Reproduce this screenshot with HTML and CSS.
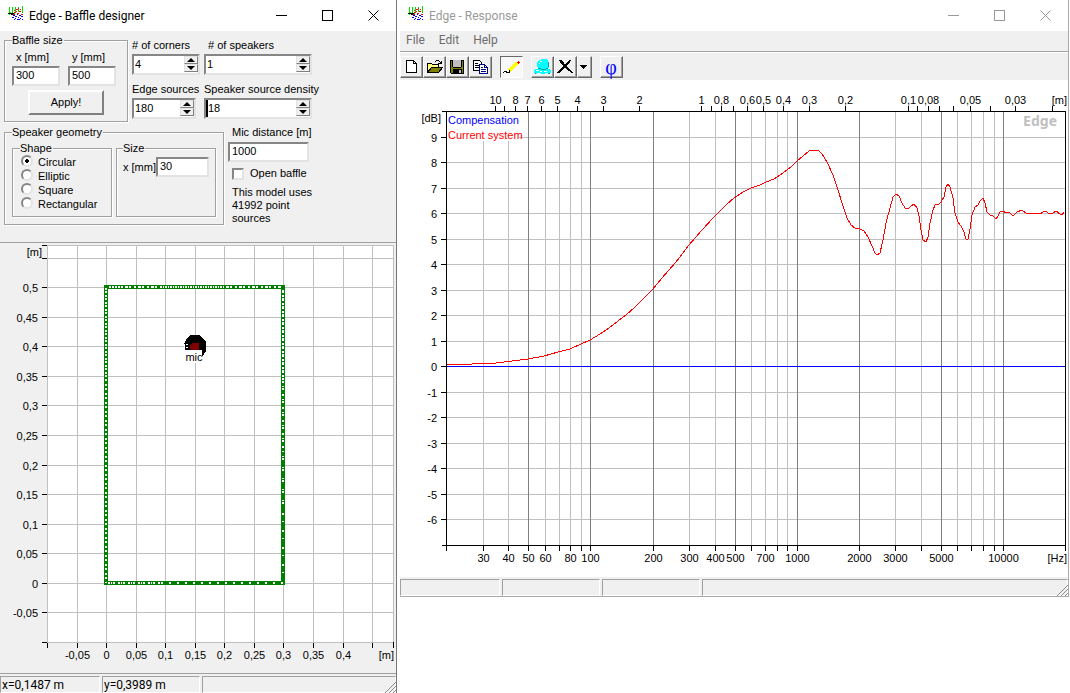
FILE: index.html
```html
<!DOCTYPE html>
<html lang="en">
<head>
    <meta charset="UTF-8">
    <meta name="viewport" content="width=device-width, initial-scale=1.0">
    <title>Edge</title>
    <link rel="stylesheet" href="styles.css">
</head>
<body>
    <svg class="defs" aria-hidden="true">
        <symbol id="app-icon" viewBox="0 0 16 16">
            <path d="M1.500 1v8M4.500 1v7M7.500 1v6M10.500 1v5M14.500 0v7M1 6.500h2M4 7.500h3" stroke="#00e000" />
            <path d="M0 7.500h6M3 8.500h4" stroke="#000" />
            <path d="M6 4.500h1M8 3.500h2M11 5.500h2M6 6.500h2M9 7.500h2M12 3.500h1M13 8.500h2M10 2.500h1M8 5.500h1M5 8.500h2" stroke="#f00" />
            <path d="M5 9.500h2M9 8.500h1M7 10.500h2M11 9.500h2M4 11.500h2M10 11.500h1M13 10.500h2M7 12.500h1M9 13.500h3M12 12.500h1M6 13.500h1M14 13.500h1" stroke="#00f" />
        </symbol>
        <symbol id="win-min" viewBox="0 0 11 11"><path d="M0 5.500h11" /></symbol>
        <symbol id="win-max" viewBox="0 0 11 11"><path d="M.5 .5h10v10h-10z" /></symbol>
        <symbol id="win-close" viewBox="0 0 11 11"><path d="M.5 .5l10 10M10.500 .5l-10 10" /></symbol>
        <symbol id="grip" viewBox="0 0 12 12">
            <path d="M1 12L12 1M5 12l7-7M9 12l3-3" stroke="#909090" />
        </symbol>
    </svg>

    <main class="desktop">
        <!-- Baffle designer -->
        <section class="window designer">
            <header class="titlebar">
                <svg class="app-icon"><use href="#app-icon" /></svg>
                <h1>Edge - Baffle designer</h1>
                <button class="win-btn" aria-label="Minimize"><svg><use href="#win-min" /></svg></button>
                <button class="win-btn" aria-label="Maximize"><svg><use href="#win-max" /></svg></button>
                <button class="win-btn" aria-label="Close"><svg class="smooth"><use href="#win-close" /></svg></button>
            </header>

            <form class="settings">
                <div class="row">
                    <fieldset class="group baffle-size">
                        <legend>Baffle size</legend>
                        <div class="pair">
                            <div class="field">
                                <label for="baffleX">x [mm]</label>
                                <input type="text" id="baffleX" value="300">
                            </div>
                            <div class="field">
                                <label for="baffleY">y [mm]</label>
                                <input type="text" id="baffleY" value="500">
                            </div>
                        </div>
                        <button type="button" class="apply">Apply!</button>
                    </fieldset>
                    <div class="spinners">
                        <div class="spin-field">
                            <label for="corners"># of corners</label>
                            <div class="spin">
                                <input type="text" id="corners" value="4">
                                <span class="updown"><button type="button" aria-label="Up"></button><button type="button" aria-label="Down"></button></span>
                            </div>
                        </div>
                        <div class="spin-field">
                            <label for="speakers" class="indent"># of speakers</label>
                            <div class="spin">
                                <input type="text" id="speakers" value="1">
                                <span class="updown"><button type="button" aria-label="Up"></button><button type="button" aria-label="Down"></button></span>
                            </div>
                        </div>
                        <div class="spin-field">
                            <label for="edgeSources">Edge sources</label>
                            <div class="spin narrow">
                                <input type="text" id="edgeSources" value="180">
                                <span class="updown"><button type="button" aria-label="Up"></button><button type="button" aria-label="Down"></button></span>
                            </div>
                        </div>
                        <div class="spin-field">
                            <label for="density">Speaker source density</label>
                            <div class="spin caret">
                                <input type="text" id="density" value="18">
                                <span class="updown"><button type="button" aria-label="Up"></button><button type="button" aria-label="Down"></button></span>
                            </div>
                        </div>
                    </div>
                </div>

                <div class="row">
                    <fieldset class="group geometry">
                        <legend>Speaker geometry</legend>
                        <div class="pair">
                            <fieldset class="group shape">
                                <legend>Shape</legend>
                                <label><input type="radio" name="shape" checked>Circular</label>
                                <label><input type="radio" name="shape">Elliptic</label>
                                <label><input type="radio" name="shape">Square</label>
                                <label><input type="radio" name="shape">Rectangular</label>
                            </fieldset>
                            <fieldset class="group size">
                                <legend>Size</legend>
                                <div class="size-row">
                                    <label for="sizeX">x [mm]</label>
                                    <input type="text" id="sizeX" value="30">
                                </div>
                            </fieldset>
                        </div>
                    </fieldset>
                    <div class="mic">
                        <label for="micDistance">Mic distance [m]</label>
                        <input type="text" id="micDistance" value="1000">
                        <label class="check"><input type="checkbox">Open baffle</label>
                        <p>This model uses 41992 point sources</p>
                    </div>
                </div>
            </form>

            <svg id="bafflePlot" class="plot" viewBox="0 243 396 430">
                <rect x="47" y="245" width="347" height="398" fill="#fff" />
                <g id="baffleGrid"></g>
                <!-- baffle outline and its edge sources -->
                <rect x="106" y="287" width="177" height="296" fill="none" stroke="#008000" stroke-width="4" />
                <g class="sources">
                    <path d="M109 287h12" stroke-dasharray="2 1" />
                    <path d="M121 287h38" stroke-dasharray="2 2 3 1 2 3" />
                    <path d="M160 287h65" stroke-dasharray="2 1 1 1" />
                    <path d="M226 287h56" stroke-dasharray="3 1 2 3 2 2" />
                    <path d="M106 288v90" stroke-dasharray="2 1 2 2" />
                    <path d="M106 379v204" stroke-dasharray="2 3 2 2" />
                    <path d="M283 290v90" stroke-dasharray="3 2 2 1" />
                    <path d="M283 381v72" stroke-dasharray="2 3 1 1 2 4" />
                    <path d="M283 456v54" stroke-dasharray="1 1 2 7" />
                    <path d="M283 513v68" stroke-dasharray="2 6 1 8" />
                    <path d="M108 583h52" stroke-dasharray="2 1 1 1 2 3" />
                    <path d="M161 583h124" stroke-dasharray="2 6" />
                </g>
                <!-- speaker and microphone -->
                <path d="M185 350v-8l2-4 4-3h8l4 3 3 4v9l-3 5h-1v-6z" fill="#000" />
                <path d="M184 343h3v4h-3z" fill="#000" />
                <path d="M184.500 344v5M186 344.500h2M186 347.500h2" stroke="#fff" />
                <path d="M190 345l2-2h4l3-1v8h-8l-1-2z" fill="#800000" />
                <path d="M186 350h16v13h-16z" fill="#fff" />
                <text x="194" y="361" class="mid">mic</text>
            </svg>

            <footer class="statusbar">
                <span>x=0,1487 m</span>
                <span>y=0,3989 m</span>
                <span></span>
                <svg class="grip"><use href="#grip" /></svg>
            </footer>
        </section>

        <!-- Response -->
        <section class="window response">
            <header class="titlebar inactive">
                <svg class="app-icon"><use href="#app-icon" /></svg>
                <h1>Edge - Response</h1>
                <button class="win-btn" aria-label="Minimize"><svg><use href="#win-min" /></svg></button>
                <button class="win-btn" aria-label="Maximize"><svg><use href="#win-max" /></svg></button>
                <button class="win-btn" aria-label="Close"><svg class="smooth"><use href="#win-close" /></svg></button>
            </header>
            <nav class="menu">
                <button>File</button>
                <button>Edit</button>
                <button>Help</button>
            </nav>
            <div class="toolbar">
                <div class="tools">
                    <button aria-label="New">
                        <svg viewBox="0 0 17 16"><path d="M3.500 1.500h7l3 3v9h-10zM10.500 1.500v3h3" fill="#fff" stroke="#000" /></svg>
                    </button>
                    <button aria-label="Open">
                        <svg viewBox="0 0 17 16">
                            <path d="M1.500 13.500v-9h4l1 1h6v3h-7z" fill="#ffff80" stroke="#000" />
                            <path d="M1.500 13.500l4-5h11l-4 5z" fill="#808000" stroke="#000" />
                            <path d="M9 2.500h1M10 1.500h3M13 2.500h1M14 3.500h1M12 4.500h3M15.500 2v3" stroke="#000" />
                        </svg>
                    </button>
                    <button aria-label="Save">
                        <svg viewBox="0 0 17 16">
                            <path d="M1.500 1.500h13v13h-12l-1-1z" fill="#808000" stroke="#000" />
                            <path d="M4 1h8v7h-8z" fill="#c0c0c0" />
                            <path d="M4 10h9v5h-9z" fill="#000" />
                            <path d="M10 11h2v3h-2z" fill="#c0c0c0" />
                            <path d="M3.500 2v6M12.500 2v6M4 8.500h8" stroke="#000" />
                        </svg>
                    </button>
                    <button aria-label="Copy">
                        <svg viewBox="0 0 17 16">
                            <path d="M1.500 1.500h6l2 2v8h-8z" fill="#fff" stroke="#000" />
                            <path d="M3 4.500h3M3 6.500h4M3 8.500h4" stroke="#000" />
                            <path d="M7.500 5.500h5l3 3v6h-8z" fill="#fff" stroke="#000080" />
                            <path d="M12.500 5.500v3h3M9 8.500h2M9 10.500h5M9 12.500h5" fill="none" stroke="#000080" />
                        </svg>
                    </button>
                </div>
                <div class="tools">
                    <button class="pressed" aria-label="Draw" aria-pressed="true">
                        <svg viewBox="0 0 17 16">
                            <path d="M6 12l8-8" stroke="#ff0" stroke-width="3" />
                            <path d="M14 3.500h3M15.500 2v3" stroke="#f00" />
                            <path d="M0 13.500h1M1 12.500h3M3 13.500h4M6.500 11v3" stroke="#000" />
                        </svg>
                    </button>
                </div>
                <div class="tools">
                    <button aria-label="Overlay">
                        <svg viewBox="0 0 17 16">
                            <path d="M5 1h2v-1h6v1h1v2h1v5l-1 1v1h2v1h1v3h-1v1h-2v-1h-3v1h-4v-1h-3v1h-3v-1h-1v-3h1v-1h3v-2h-1v-5h1z" fill="#00ffff" />
                            <path d="M6 2.500h2M5 4.500h1M2 11.500h3M6 12.500h2M10 12.500h3M3 14.500h3" stroke="#fff" />
                            <path d="M4 9.500h3M7 10.500h5M12 9.500h2M14.500 3v5M1 14.500h1M14 14.500h2" stroke="#00a0b0" />
                        </svg>
                    </button>
                    <button aria-label="Delete">
                        <svg viewBox="0 0 17 16">
                            <path d="M2 1h2l4 5 5-5h1l-5 6 6 6h-1l-6-5-5 5h-2l6-6z" fill="#000" stroke="#000" />
                        </svg>
                    </button>
                    <button class="drop" aria-label="Delete options">
                        <svg viewBox="0 0 10 16"><path d="M1 6h7l-3 4h-1z" fill="#000" /></svg>
                    </button>
                </div>
                <div class="tools">
                    <button class="phi" aria-label="Phase">&phi;</button>
                </div>
            </div>

            <svg id="responsePlot" class="plot" viewBox="400 80 668 497">
                <g id="responseGrid"></g>
                <path d="M447 366.500h618" stroke="#00f" />
                <polyline class="curve" points="447,365 472,364 496,363 528,359 544,356 558,352 570,349 581,344 590,340 600,334 609,328 618,321 626,315 634,308 641,301 652,290 662,278 676,262 689,245 702,230 714,217 726,205 734,198 743,192 751,188 760,185 766,182 774,179 783,173 791,167 797,161 803,156 809,151 813,150 818,150 822,154 827,162 833,175 838,190 843,206 847,218 851,225 855,228 860,229 864,231 868,237 872,246 875,253 877,255 880,253 883,240 886,223 890,208 893,197 896,194 899,196 902,203 905,208 908,209 911,206 914,204 917,208 919,216 921,230 923,240 926,242 928,237 930,223 933,210 935,205 939,204 941,202 944,197 946,187 948,184 950,187 953,198 955,213 958,222 961,226 964,232 966,239 968,239 970,229 972,215 975,207 978,205 980,201 983,198 985,203 987,212 990,215 993,216 996,219 998,216 1000,212 1003,211 1006,213 1009,212 1012,215 1014,215 1017,212 1022,210 1026,213 1037,213 1040,214 1043,212 1046,211 1049,214 1053,213 1056,211 1060,214 1062,215 1064,212" />
                <path d="M442 111.500h624M442 545.500h624M446.500 111v440M1065.500 111v440" stroke="#000" />
                <rect x="447" y="113" width="72" height="28" fill="#fff" />
                <text x="448" y="124" fill="#00f">Compensation</text>
                <text x="448" y="139" fill="#f00">Current system</text>
                <text x="1057" y="126" class="end brand">Edge</text>
                <text x="441" y="122" class="end">[dB]</text>
                <text x="1067" y="104" class="end">[m]</text>
                <text x="1067" y="562" class="end">[Hz]</text>
            </svg>

            <footer class="statusbar">
                <span></span>
                <span></span>
                <span></span>
                <span></span>
                <svg class="grip"><use href="#grip" /></svg>
            </footer>
        </section>
    </main>

    <script src="plots.js"></script>
</body>
</html>
```

FILE: styles.css
```css
* {
    box-sizing: border-box;
}
body {
    margin: 0;
    background: #fff;
    color: #000;
    font-family: "Liberation Sans", Arial, sans-serif;
    font-size: 11px;
    line-height: 13px;
}
button, input {
    font: inherit;
    color: inherit;
    margin: 0;
    padding: 0;
    border-radius: 0;
}
svg {
    display: block;
    fill: none;
    shape-rendering: crispEdges;
}
.defs {
    display: none;
}
.desktop {
    display: grid;
    grid-template-columns: 397px 1fr;
    gap: 3px;
    align-items: start;
}
.window {
    background: #f0f0f0;
}
.designer {
    min-height: 100vh;
    border-right: 1px solid #777;
}
.response {
    margin-right: 1px;
    border-right: 1px solid #aaa;
    border-bottom: 1px solid #aaa;
}

/* title bar */
.titlebar {
    display: flex;
    align-items: center;
    height: 31px;
    padding-left: 8px;
    background: #fff;
}
.titlebar h1 {
    flex: 1;
    margin: 0 0 0 5px;
    font: 12px/16px Roboto, "Noto Sans", sans-serif;
}
.app-icon {
    width: 16px;
    height: 16px;
    margin-bottom: 3px;
}
.win-btn {
    display: grid;
    place-items: center;
    width: 46px;
    height: 29px;
    border: none;
    background: none;
}
.win-btn svg {
    width: 11px;
    height: 11px;
    stroke: currentColor;
}
.win-btn .smooth {
    shape-rendering: auto;
}
.inactive {
    color: #999;
}

/* settings form */
.settings {
    padding: 3px 4px 17px;
    border-bottom: 1px solid #a0a0a0;
}
.row {
    display: flex;
    align-items: flex-start;
    gap: 4px;
}
.row + .row {
    margin-top: 4px;
}
.group {
    min-width: 0;
    margin: 0;
    padding: 0 7px;
    border: 1px solid #a0a0a0;
    box-shadow: 1px 1px 0 #fff, inset 1px 1px 0 #fff;
}
legend {
    padding: 0 1px 0 0;
    background: #f0f0f0;
}
.pair {
    display: flex;
    gap: 8px;
}
input[type="text"] {
    width: 100%;
    min-width: 0;
    height: 20px;
    padding: 0 2px 2px;
    background: #fff;
    border: 2px solid;
    border-color: #868686 #e3e3e3 #e3e3e3 #868686;
    outline: none;
}
.baffle-size {
    width: 124px;
    height: 88px;
}
.baffle-size .field {
    width: 48px;
}
.field label {
    display: block;
    padding: 4px 0 2px 4px;
}
.apply {
    display: block;
    width: 76px;
    height: 25px;
    margin: 4px 0 0 16px;
    background: #f0f0f0;
    border: 2px solid;
    border-color: #fff #808080 #808080 #fff;
}
.spinners {
    display: grid;
    grid-template-columns: 68px 108px;
    gap: 8px 4px;
    padding-top: 5px;
}
.spin-field label {
    display: block;
    padding-bottom: 2px;
    white-space: nowrap;
}
.spin-field .indent {
    padding-left: 4px;
}
.spin {
    display: flex;
    height: 21px;
    background: #fff;
    border: 2px solid;
    border-color: #868686 #e3e3e3 #e3e3e3 #868686;
}
.spin.narrow {
    width: 64px;
}
.spin input[type="text"] {
    flex: 1;
    height: 17px;
    padding: 0 1px 2px;
    border: none;
}
.spin.caret input[type="text"] {
    border-left: 2px solid #000;
    padding: 0 0 2px;
}
.updown {
    display: flex;
    flex-direction: column;
    width: 14px;
    height: 16px;
}
.updown button {
    display: grid;
    place-items: center;
    height: 8px;
    background: #f0f0f0;
    border: 1px solid;
    border-color: #e3e3e3 #808080 #808080 #e3e3e3;
}
.updown button::before {
    content: "";
    border: 4px solid transparent;
    border-top: none;
    border-bottom: 4px solid #000;
}
.updown button:last-child::before {
    transform: rotate(180deg);
}
.geometry {
    width: 220px;
    height: 99px;
}
.geometry .pair {
    gap: 4px;
    padding-top: 3px;
}
.shape, .size {
    width: 100px;
    height: 75px;
}
.shape label {
    display: flex;
    align-items: center;
    height: 14px;
}
input[type="radio"] {
    appearance: none;
    width: 12px;
    height: 12px;
    margin: 0 5px 2px 1px;
    background: #fff;
    border: 2px solid;
    border-color: #868686 #e3e3e3 #e3e3e3 #868686;
    border-radius: 50%;
}
input[type="radio"]:checked {
    background: radial-gradient(#000 0 2px, #fff 2px);
}
.size {
    padding: 0 6px;
}
.size-row {
    display: flex;
    align-items: center;
    padding-top: 2px;
    white-space: nowrap;
}
.mic {
    width: 90px;
}
.mic > label {
    display: block;
    padding: 0 0 3px 4px;
    white-space: nowrap;
}
.mic input[type="text"] {
    width: 81px;
}
.mic .check {
    display: flex;
    align-items: center;
    gap: 6px;
    padding: 5px 0 6px 4px;
}
input[type="checkbox"] {
    appearance: none;
    width: 12px;
    height: 12px;
    background: #fff;
    border: 2px solid;
    border-color: #868686 #e3e3e3 #e3e3e3 #868686;
}
.mic p {
    margin: 0 0 0 4px;
}

/* plots */
.plot {
    width: 100%;
    height: auto;
}
.response .plot {
    background: #fff;
}
.plot text {
    fill: #000;
}
.plot text[fill="#00f"] {
    fill: #00f;
}
.plot text[fill="#f00"] {
    fill: #f00;
}
.plot .mid {
    text-anchor: middle;
}
.plot .end {
    text-anchor: end;
}
.plot .brand {
    fill: #c0c0c0;
    font: bold 14px "Noto Sans", sans-serif;
}
.sources {
    stroke: #fff;
    stroke-width: 2px;
}
.curve {
    stroke: #f00;
    stroke-width: 1px;
}

/* menu and toolbar */
.menu {
    display: flex;
    height: 21px;
    border-bottom: 1px solid #a0a0a0;
}
.menu button {
    padding: 0 8px 2px 6px;
    border: none;
    background: none;
    color: #6d6d6d;
    font: 12px/16px Roboto, "Noto Sans", sans-serif;
}
.toolbar {
    display: flex;
    gap: 8px;
    height: 28px;
    padding-top: 3px;
    border-top: 1px solid #fff;
}
.tools {
    display: flex;
}
.toolbar button {
    display: grid;
    place-items: center;
    width: 23px;
    height: 22px;
    padding: 0 1px 1px 0;
    background: #f0f0f0;
    border: 1px solid;
    border-color: #fff #696969 #696969 #fff;
    box-shadow: inset -1px -1px 0 #a0a0a0;
}
.toolbar svg {
    width: 17px;
    height: 16px;
}
.toolbar .pressed {
    background: #f8f8f8;
    border-color: #696969 #fff #fff #696969;
    box-shadow: none;
}
.toolbar .drop {
    width: 15px;
}
.toolbar .drop svg {
    width: 10px;
}
.toolbar .phi {
    color: #00f;
    font: 20px/16px "Liberation Serif", serif;
}

/* status bar */
.statusbar {
    display: flex;
    align-items: flex-end;
    gap: 2px;
    height: 19px;
    position: relative;
    font: 12px/16px Roboto, "Noto Sans", sans-serif;
}
.designer .statusbar {
    height: 20px;
    border-top: 1px solid #a0a0a0;
}
.statusbar span {
    width: 100px;
    height: 17px;
    padding-left: 1px;
    border: 1px solid;
    border-color: #a0a0a0 #fff #fff #a0a0a0;
}
.statusbar span:nth-of-type(2), .statusbar span:nth-of-type(3) {
    width: 98px;
}
.statusbar span:last-of-type {
    flex: 1;
}
.grip {
    position: absolute;
    right: 0;
    bottom: 0;
    width: 12px;
    height: 12px;
    shape-rendering: auto;
}
```

FILE: plots.js
```js
const SVG = "http://www.w3.org/2000/svg";

function line(parent, x1, y1, x2, y2, color) {
    const el = document.createElementNS(SVG, "path");
    el.setAttribute("d", `M${x1} ${y1}L${x2} ${y2}`);
    el.setAttribute("stroke", color);
    parent.appendChild(el);
}

function label(parent, x, y, value, cls) {
    const el = document.createElementNS(SVG, "text");
    el.setAttribute("x", x);
    el.setAttribute("y", y);
    el.setAttribute("class", cls);
    el.textContent = String(value).replace(".", ",");
    parent.appendChild(el);
}

// centre of the pixel that holds v
const px = v => Math.floor(v) + 0.5;

function drawBaffleGrid() {
    const g = document.getElementById("baffleGrid");
    const scale = 591;
    for (let i = -2; i <= 9; i++) {
        const x = px(106.62 + i * 0.05 * scale);
        line(g, x, 245, x, 642, "#c0c0c0");
        line(g, x, 642, x, 648, "#000");
        if (i > -2 && i < 9) label(g, x, 659, i * 5 / 100, "mid");
    }
    for (let i = -2; i <= 11; i++) {
        const y = px(583.2 - i * 0.05 * scale);
        line(g, 47, y, 394, y, "#c0c0c0");
        line(g, 42, y, 47, y, "#000");
        if (i > -2 && i < 11) label(g, 38, y + 4, i * 5 / 100, "end");
    }
    line(g, 47, 245.5, 394, 245.5, "#c0c0c0");
    line(g, 42, 245.5, 47, 245.5, "#000");
    line(g, 393.5, 245, 393.5, 642, "#c0c0c0");
    line(g, 393.5, 642, 393.5, 648, "#000");
    label(g, 42, 256, "[m]", "end");
    label(g, 394, 659, "[m]", "end");
}

function drawResponseGrid() {
    const g = document.getElementById("responseGrid");
    const freqX = f => 446.75 + 619 / 3 * Math.log10(f / 20);
    const named = [30, 40, 50, 60, 80, 100, 200, 300, 400, 500, 700, 1000, 2000, 3000, 5000, 10000];
    const waves = [10, 8, 7, 6, 5, 4, 3, 2, 1, 0.8, 0.6, 0.5, 0.4, 0.3, 0.2, 0.1, 0.08, 0.05, 0.03];

    for (let db = -6; db <= 9; db++) {
        const y = px(366.6 - db * 25.5);
        line(g, 447, y, 1065, y, "#c0c0c0");
        line(g, 441, y, 447, y, "#000");
        label(g, 437, y + 4, db, "end");
    }
    for (const decade of [10, 100, 1000, 10000]) {
        for (let n = 1; n <= 9; n++) {
            const f = n * decade;
            if (f <= 20 || f >= 20000) continue;
            const x = px(freqX(f));
            line(g, x, 112, x, 545, n == 1 || n == 2 || n == 5 ? "#808080" : "#c0c0c0");
            line(g, x, 546, x, 551, "#000");
            if (named.includes(f)) label(g, x, 562, f, "mid");
        }
    }
    // wavelength scale along the top
    for (const decade of [1000, 100, 10, 1]) {
        for (let n = 1; n <= 9; n++) {
            const wave = n * decade / 100;
            if (wave > 10 || wave < 0.02) continue;
            const x = px(freqX(344 / wave));
            line(g, x, 106, x, 111, "#000");
            if (waves.includes(wave)) label(g, x, 104, wave, "mid");
        }
    }
}

drawBaffleGrid();
drawResponseGrid();
```
